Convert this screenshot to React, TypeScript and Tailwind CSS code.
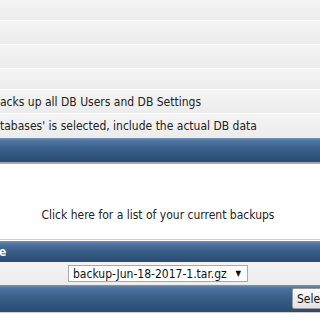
import React from "react";

const rowBg = "bg-[linear-gradient(#f4f4f4,#ececec)]";
const blueBg = "bg-[linear-gradient(#7393ba_0px,#4d739e_3px,#385d87_50%,#294b71_100%)]";

export default function App() {
  return (
    <div
      className="w-[320px] h-[320px] overflow-hidden bg-white text-[12px] text-[#222]"
      style={{ fontFamily: '"DejaVu Sans Condensed", "DejaVu Sans", Tahoma, sans-serif' }}
    >
      <div className={`h-[20px] ${rowBg}`} />
      <div className="h-px bg-white" />
      <div className={`h-[23px] ${rowBg}`} />
      <div className="h-px bg-white" />
      <div className={`h-[23px] ${rowBg}`} />
      <div className="h-px bg-white" />
      <div className={`h-[20px] ${rowBg}`} />
      <div className="h-px bg-white" />
      <div className={`h-[23px] ${rowBg} flex items-center whitespace-nowrap`}>
        acks up all DB Users and DB Settings
      </div>
      <div className="h-px bg-white" />
      <div className={`h-[24px] ${rowBg} flex items-center whitespace-nowrap`}>
        tabases' is selected, include the actual DB data
      </div>
      <div className={`h-[24px] ${blueBg}`} />
      <div className="h-[2px] bg-[#a8a8a8]" />
      <div className="h-[75px] flex items-end justify-center pb-[15px] pr-[4px]">
        <span className="whitespace-nowrap">Click here for a list of your current backups</span>
      </div>
      <div className="h-px bg-[#cfcfcf]" />
      <div className="h-px bg-white" />
      <div className={`h-[21px] ${blueBg} flex items-center text-white font-bold`}>
        <span className="-ml-[1px]">e</span>
      </div>
      <div className={`h-[23px] ${rowBg} flex items-center justify-center`}>
        <div className="ml-[-4px] w-[180px] h-[17px] border border-[#a9a9a9] bg-white flex items-center justify-between pl-[4px] pr-[6px]">
          <span className="whitespace-nowrap text-[#111]">backup-Jun-18-2017-1.tar.gz</span>
          <span className="text-[8px] text-[#111]">▼</span>
        </div>
      </div>
      <div className={`h-[27px] ${blueBg} flex items-center`}>
        <div className="ml-[292px] h-[21px] w-[44px] shrink-0 border border-[#9a9a9a] rounded-[2px] bg-[linear-gradient(#fafafa,#e3e3e3)] flex items-center pl-[4px] text-[#111] whitespace-nowrap">
          Select
        </div>
      </div>
      <div className="h-px bg-[#cfcfcf]" />
    </div>
  );
}
